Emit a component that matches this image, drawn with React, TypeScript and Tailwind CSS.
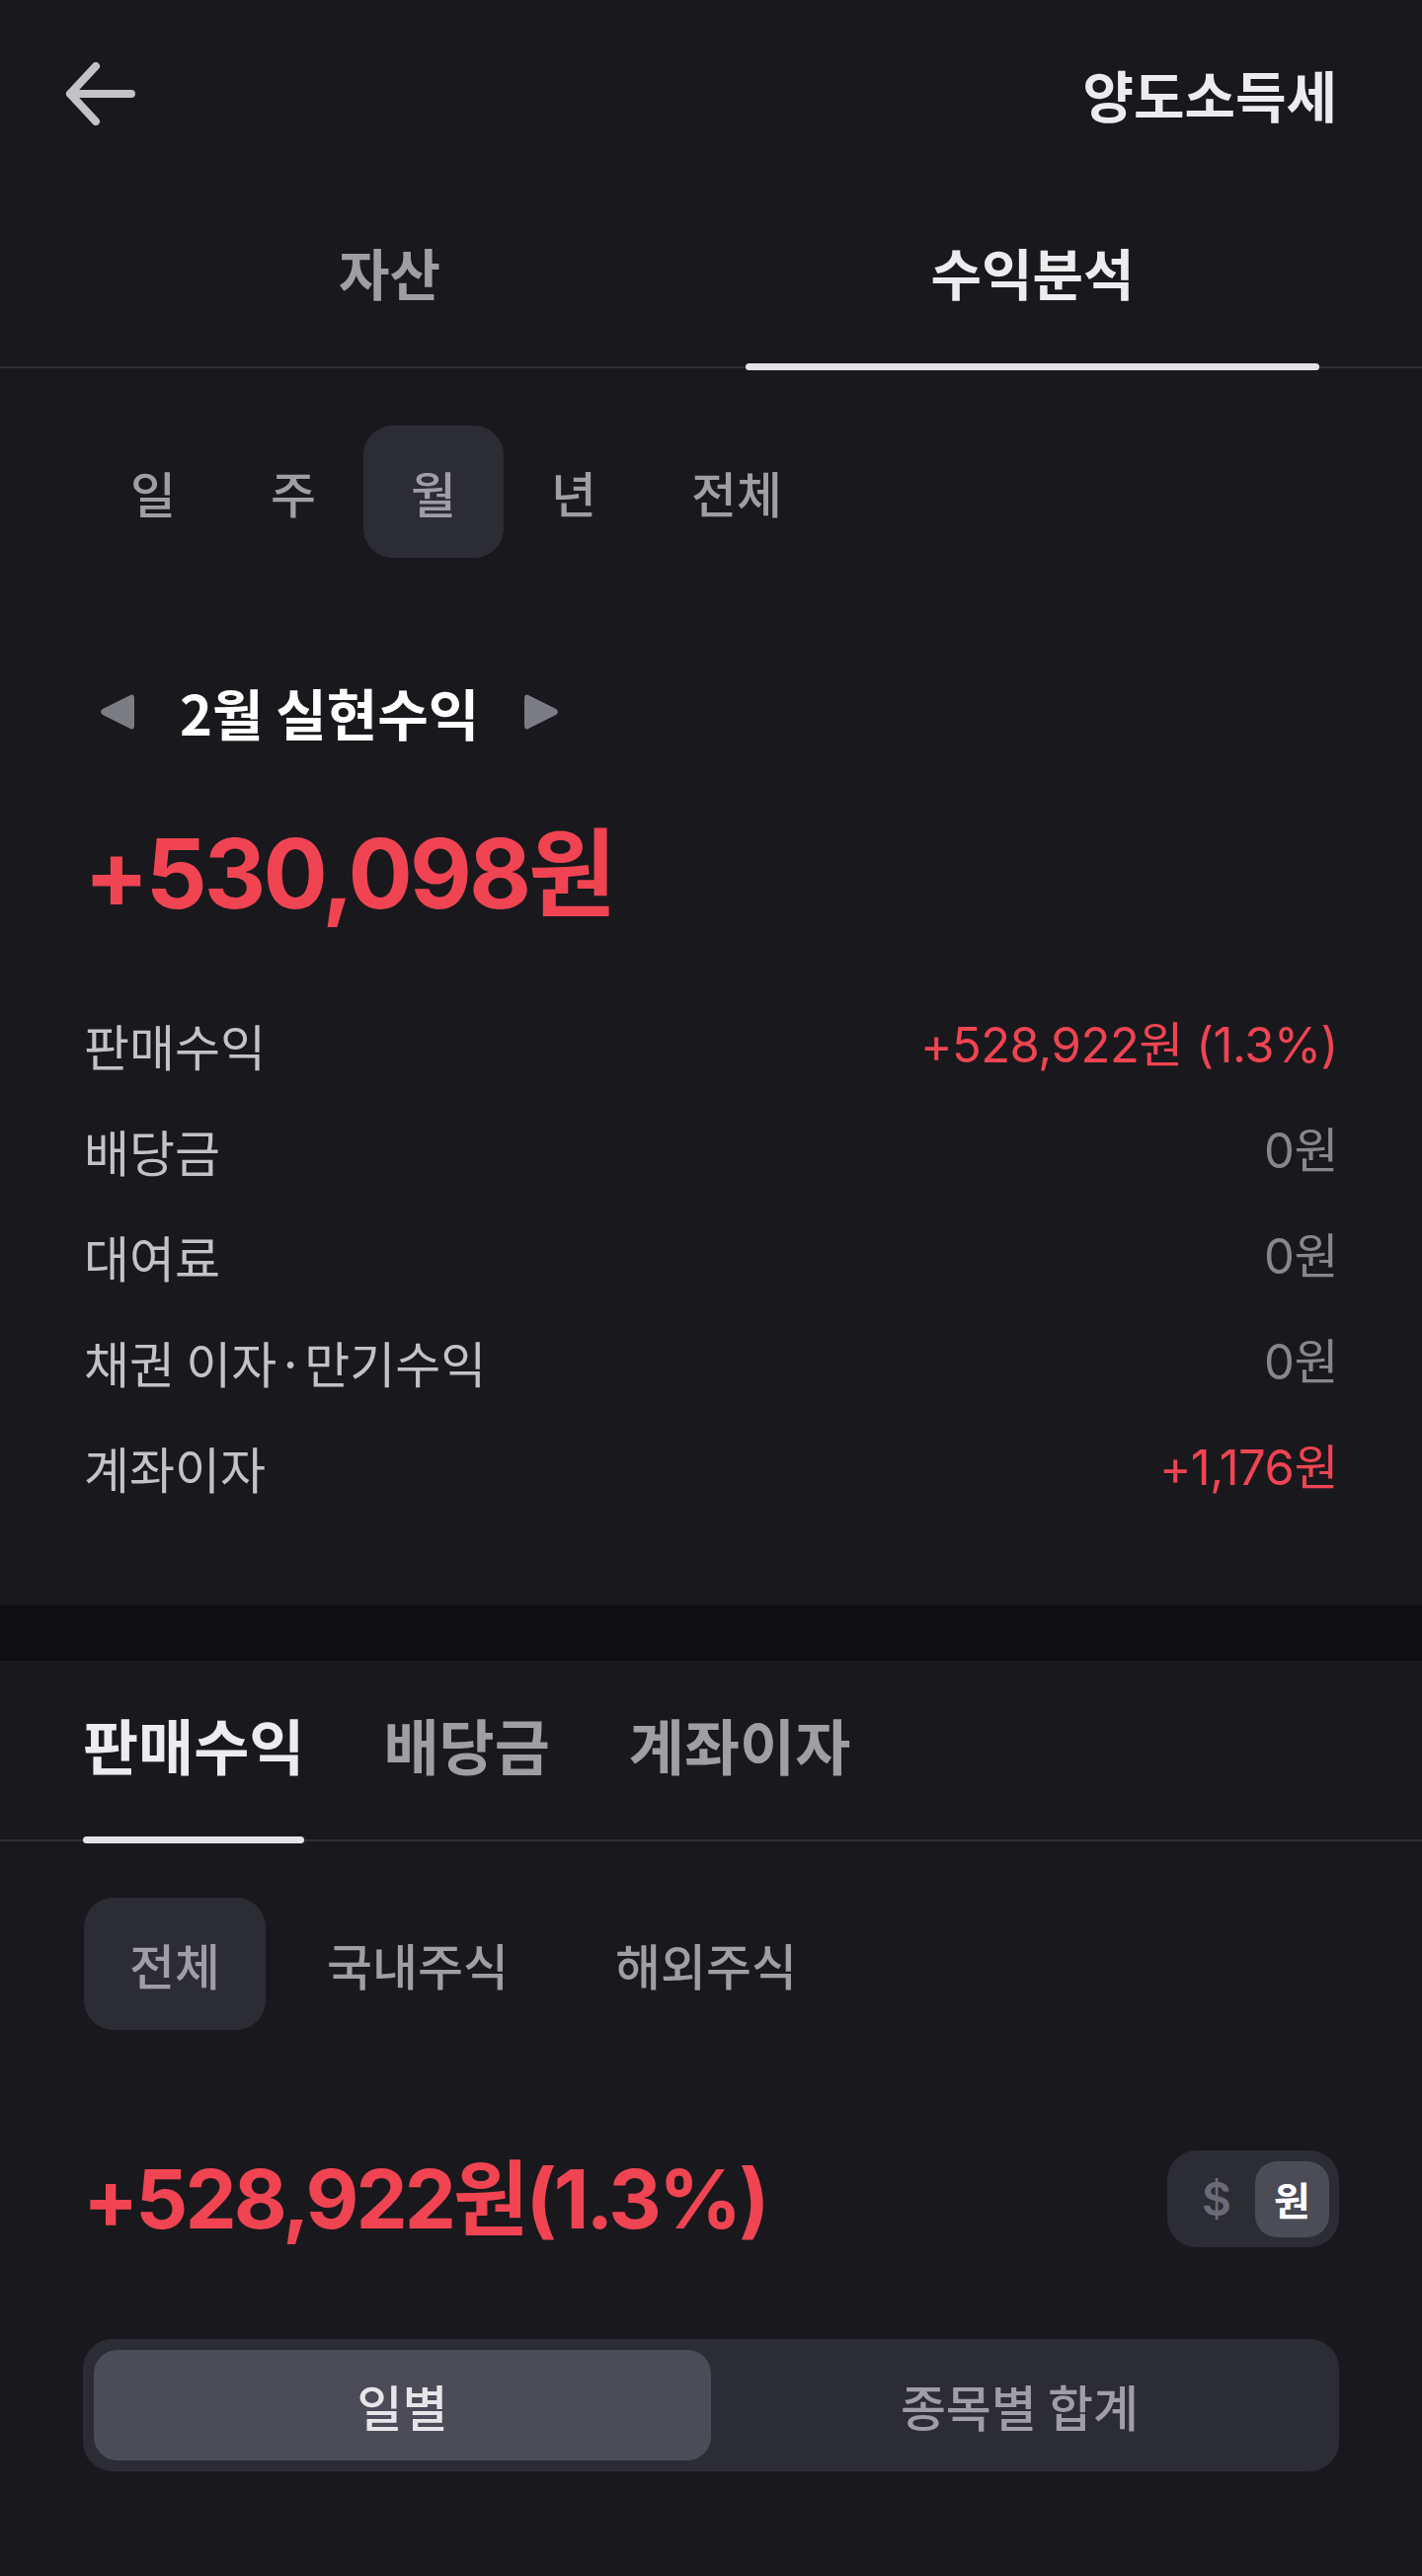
import React, { useState } from 'react';

const FONT = { fontFamily: 'Inter, "Noto Sans CJK KR", "Noto Sans", sans-serif' };
const KR = { fontFamily: '"Noto Sans CJK KR", "Noto Sans", sans-serif' };

const periods = ['일', '주', '월', '년', '전체'];

const breakdown = [
  { label: '판매수익', value: '+528,922원 (1.3%)', red: true },
  { label: '배당금', value: '0원', red: false },
  { label: '대여료', value: '0원', red: false },
  { label: '채권 이자·만기수익', value: '0원', red: false },
  { label: '계좌이자', value: '+1,176원', red: true },
];

const BackArrow = () => (
  <svg width="72" height="64" viewBox="0 0 72 64" fill="none">
    <path
      d="M67 32H5M5 32L31 4M5 32L31 60"
      stroke="#c3c3c6"
      strokeWidth="8"
      strokeLinecap="round"
      strokeLinejoin="round"
    />
  </svg>
);

const Triangle = ({ dir }: { dir: 'left' | 'right' }) => (
  <svg width="40" height="42" viewBox="0 0 40 42" fill="#7c7c84">
    {dir === 'left' ? (
      <path d="M34 4 Q38 2 38 8 V34 Q38 40 34 38 L6 24 Q2 21 6 18 Z" />
    ) : (
      <path d="M6 4 Q2 2 2 8 V34 Q2 40 6 38 L34 24 Q38 21 34 18 Z" />
    )}
  </svg>
);

export default function App() {
  const [period, setPeriod] = useState('월');
  const [mainTab, setMainTab] = useState('수익분석');
  const [subTab, setSubTab] = useState('판매수익');
  const [market, setMarket] = useState('전체');
  const [view, setView] = useState('일별');

  return (
    <div className="min-h-[2609px] w-[1440px] bg-[#19191d] text-white" style={FONT}>
      {/* header */}
      <div className="flex h-[190px] items-center justify-between pl-[66px] pr-[86px]">
        <button>
          <BackArrow />
        </button>
        <div className="text-[56px] font-semibold text-[#ececee]" style={KR}>
          양도소득세
        </div>
      </div>

      {/* main tabs */}
      <div className="border-b-2 border-[#2f2f35]">
        <div className="flex px-[69px]">
          {['자산', '수익분석'].map(t => (
            <button
              key={t}
              onClick={() => setMainTab(t)}
              className="flex h-[181px] flex-1 flex-col items-center justify-between"
            >
              <span
                className={`pt-[53px] text-[56px] font-semibold leading-[64px] ${
                  mainTab === t ? 'text-[#ececee]' : 'text-[#9e9ea4]'
                }`}
                style={KR}
              >
                {t}
              </span>
              <span
                className={`-mb-[4px] h-[7px] w-[581px] rounded-full ${
                  mainTab === t ? 'bg-[#e4e4e7]' : 'bg-transparent'
                }`}
              />
            </button>
          ))}
        </div>
      </div>

      {/* period selector */}
      <div className="flex px-[84px] pt-[58px]">
        {periods.map(p => (
          <button
            key={p}
            onClick={() => setPeriod(p)}
            className={`h-[134px] rounded-[30px] px-[48px] text-[50px] font-medium text-[#9e9ea4] ${
              period === p ? 'bg-[#2c2c34]' : ''
            }`}
            style={KR}
          >
            {p}
          </button>
        ))}
      </div>

      {/* realized profit summary */}
      <div className="px-[85px] pb-[86px]">
        <div className="mt-[124px] flex h-[64px] items-center">
          <span className="ml-[13px] flex">
            <Triangle dir="left" />
          </span>
          <span className="ml-[44px] text-[56px] font-semibold leading-[64px] text-white" style={KR}>
            2월 실현수익
          </span>
          <span className="ml-[44px] flex">
            <Triangle dir="right" />
          </span>
        </div>
        <div className="mt-[72px] text-[97px] font-bold leading-[120px] tracking-[-3px] text-[#f04452]">
          +530,098원
        </div>
        <div className="mt-[60px] flex flex-col">
          {breakdown.map(row => (
            <div key={row.label} className="flex h-[107px] items-center justify-between">
              <span className="text-[50px] text-[#c3c3c6]" style={KR}>
                {row.label}
              </span>
              <span className={`text-[49px] tracking-[-0.5px] ${row.red ? 'text-[#f04452]' : 'text-[#86868e]'}`}>
                {row.value}
              </span>
            </div>
          ))}
        </div>
      </div>

      {/* divider band */}
      <div className="h-[56px] bg-[#0f0f12]" />

      {/* sub tabs */}
      <div className="border-b-2 border-[#2f2f35]">
        <div className="flex gap-[80px] px-[84px]">
          {['판매수익', '배당금', '계좌이자'].map(t => (
            <button
              key={t}
              onClick={() => setSubTab(t)}
              className="flex h-[181px] flex-col items-stretch justify-between"
            >
              <span
                className={`pt-[50px] text-[61px] font-semibold leading-[70px] ${
                  subTab === t ? 'text-[#ececee]' : 'text-[#9e9ea4]'
                }`}
                style={KR}
              >
                {t}
              </span>
              <span
                className={`-mb-[4px] h-[7px] rounded-full ${
                  subTab === t ? 'bg-[#e4e4e7]' : 'bg-transparent'
                }`}
              />
            </button>
          ))}
        </div>
      </div>

      {/* market filter */}
      <div className="flex gap-[16px] px-[85px] pt-[57px]">
        {['전체', '국내주식', '해외주식'].map(m => (
          <button
            key={m}
            onClick={() => setMarket(m)}
            className={`h-[134px] rounded-[30px] px-[46px] text-[50px] font-medium text-[#9e9ea4] ${
              market === m ? 'bg-[#2c2c34]' : ''
            }`}
            style={KR}
          >
            {m}
          </button>
        ))}
      </div>

      {/* total sale profit + currency toggle */}
      <div className="mt-[121px] flex h-[100px] items-center justify-between px-[84px]">
        <div className="text-[83px] font-bold leading-[100px] tracking-[-3px] text-[#f04452]">
          +528,922원(1.3%)
        </div>
        <div className="flex h-[98px] w-[174px] items-center justify-end rounded-[30px] bg-[#2c2c34] p-[10px]">
          <span className="mr-[24px] text-[46px] font-semibold text-[#6b6b75]">$</span>
          <span
            className="flex h-[77px] w-[75px] items-center justify-center rounded-[22px] bg-[#4c4c57] text-[40px] font-bold text-white"
            style={KR}
          >
            원
          </span>
        </div>
      </div>

      {/* view segmented control */}
      <div className="mx-[84px] mt-[92px] flex h-[134px] rounded-[30px] bg-[#2c2c34] p-[11px]">
        {['일별', '종목별 합계'].map(v => (
          <button
            key={v}
            onClick={() => setView(v)}
            className={`flex flex-1 items-center justify-center rounded-[24px] text-[50px] font-medium ${
              view === v ? 'bg-[#4c4c58] text-[#e6e6e8]' : 'text-[#9e9ea4]'
            }`}
            style={KR}
          >
            {v}
          </button>
        ))}
      </div>
    </div>
  );
}
